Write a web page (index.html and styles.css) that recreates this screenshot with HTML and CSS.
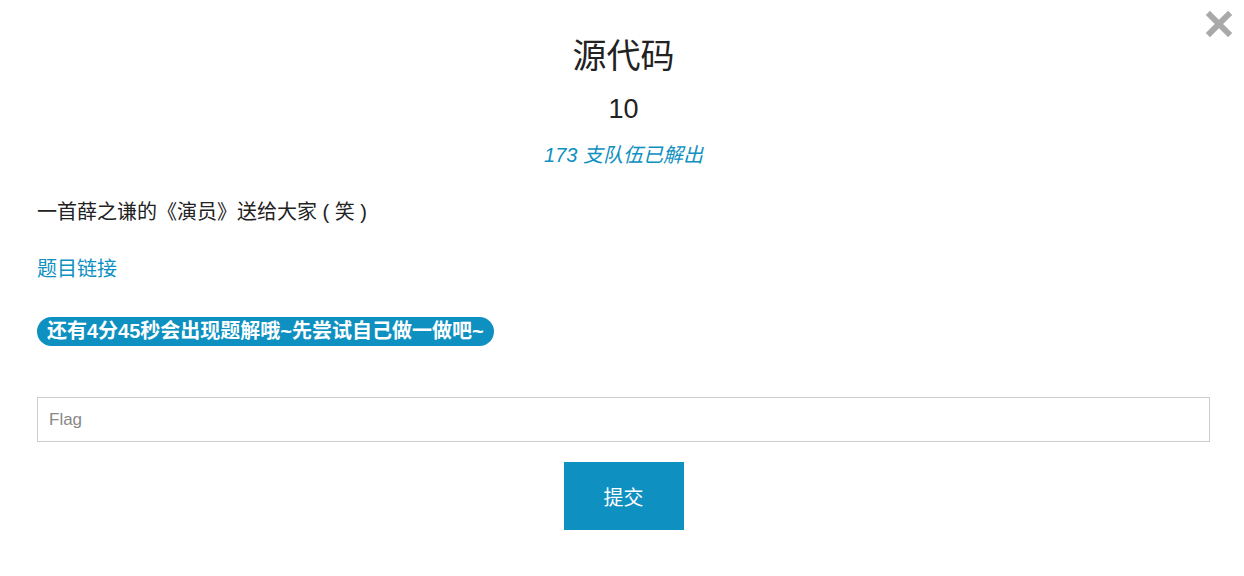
FILE: index.html
```html
<!DOCTYPE html>
<html lang="zh-CN">
<head>
<meta charset="utf-8">
<title>源代码</title>
<link rel="stylesheet" href="styles.css">
</head>
<body>
<div class="modal">
  <button class="close" aria-label="关闭">
    <svg width="26" height="26" viewBox="0 0 26 26"><path d="M4 4 L22 22 M22 4 L4 22" stroke="#a9a9a9" stroke-width="6" stroke-linecap="square"/></svg>
  </button>
  <div class="head">
    <h1 class="title">源代码</h1>
    <div class="score">10</div>
    <div class="solves">173 支队伍已解出</div>
  </div>
  <p class="desc">一首薛之谦的《演员》送给大家 ( 笑 )</p>
  <p class="link-row"><a class="link" href="#">题目链接</a></p>
  <div class="hint-row"><span class="hint">还有4分45秒会出现题解哦~先尝试自己做一做吧~</span></div>
  <form class="flag-form">
    <input class="flag-input" type="text" placeholder="Flag">
    <button class="submit" type="button">提交</button>
  </form>
</div>
</body>
</html>
```
FILE: styles.css
```css
html, body {
  margin: 0;
  padding: 0;
  background: #fff;
}
body {
  font-family: "Liberation Sans", "Noto Sans CJK SC", sans-serif;
  color: #222;
}
.modal {
  position: relative;
  padding: 0 34px 0 37px;
}
.close {
  position: absolute;
  top: 11px;
  right: 12px;
  border: 0;
  background: none;
  padding: 0;
  cursor: pointer;
}
.head {
  text-align: center;
  padding-top: 36px;
}
.title {
  margin: 0;
  font-size: 34px;
  font-weight: normal;
  line-height: 40px;
  color: #222;
}
.score {
  margin-top: 17px;
  font-size: 27px;
  line-height: 32px;
  color: #222;
}
.solves {
  margin-top: 18px;
  font-size: 20px;
  line-height: 24px;
  font-style: italic;
  color: #0e90c1;
}
.desc {
  margin: 32px 0 0;
  font-size: 20px;
  line-height: 26px;
  color: #222;
}
.link-row {
  margin: 31px 0 0;
  font-size: 20px;
  line-height: 26px;
}
.link {
  color: #0e90c1;
  text-decoration: none;
}
.hint-row {
  margin-top: 35px;
}
.hint {
  display: inline-block;
  background: #0e90c1;
  color: #fff;
  font-weight: bold;
  font-size: 20px;
  line-height: 29px;
  padding: 0 10px;
  border-radius: 15px;
}
.flag-form {
  margin-top: 51px;
  display: flex;
  flex-direction: column;
  align-items: center;
  gap: 20px;
}
.flag-input {
  box-sizing: border-box;
  width: 100%;
  height: 45px;
  border: 1px solid #ccc;
  padding: 0 11px;
  font-family: "Liberation Sans", sans-serif;
  font-size: 17px;
  color: #555;
  outline: none;
}
.flag-input::placeholder {
  color: #888;
}
.submit {
  width: 120px;
  height: 68px;
  border: 0;
  background: #0e90c1;
  color: #fff;
  font-family: "Noto Sans CJK SC", sans-serif;
  font-size: 20px;
  cursor: pointer;
}
```
